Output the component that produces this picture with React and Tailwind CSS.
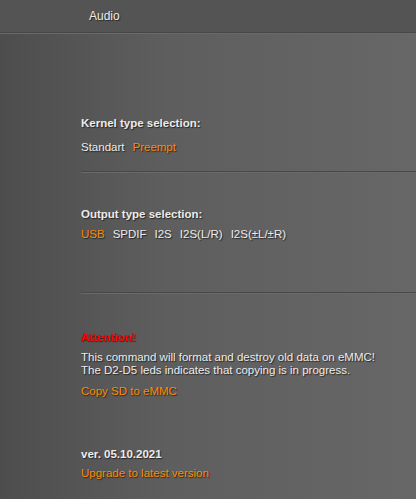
import React from 'react'

const shadow = '[text-shadow:1px_1px_1px_#262626]'

const Option = ({ label, active }) => (
  <span className={active ? 'text-[#ff8a00]' : 'text-[#ececec]'}>{label}</span>
)

const Divider = () => (
  <div className="ml-[81px] border-t border-t-[#484848] border-b border-b-[#6a6a6a]" />
)

const App = () => {
  return (
    <div className={`h-[499px] w-[416px] overflow-hidden bg-[linear-gradient(90deg,#4d4d4d_0%,#5e5e5e_40%,#676767_100%)] font-['Liberation_Sans',Arial,sans-serif] text-[11.5px] text-[#ececec] ${shadow}`}>
      <header className="flex h-[33px] items-center border-b border-b-[#474747] bg-[#545454] pl-[89px] shadow-[0_1px_0_#6a6a6a]">
        <span className="text-[12px]">Audio</span>
      </header>

      <section className="pl-[81px] pt-[83px]">
        <h2 className="font-bold leading-[14px]">Kernel type selection:</h2>
        <div className="mt-[10px] flex gap-[8px] leading-[14px]">
          <Option label="Standart" />
          <Option label="Preempt" active />
        </div>
      </section>

      <div className="mt-[17px]">
        <Divider />
      </div>

      <section className="pl-[81px] pt-[34px]">
        <h2 className="font-bold leading-[14px]">Output type selection:</h2>
        <div className="mt-[6px] flex gap-[8px] leading-[14px]">
          <Option label="USB" active />
          <Option label="SPDIF" />
          <Option label="I2S" />
          <Option label="I2S(L/R)" />
          <Option label="I2S(±L/±R)" />
        </div>
      </section>

      <div className="mt-[51px]">
        <Divider />
      </div>

      <section className="pl-[81px] pt-[36px]">
        <h2 className="font-bold leading-[14px] text-[#ff0000]">Attention!</h2>
        <p className="mt-[7px] leading-[13px]">
          This command will format and destroy old data on eMMC!
          <br />
          The D2-D5 leds indicates that copying is in progress.
        </p>
        <a className="mt-[7px] block leading-[14px] text-[#ff8a00]">Copy SD to eMMC</a>
      </section>

      <section className="pl-[81px] pt-[49px]">
        <h2 className="font-bold leading-[14px]">ver. 05.10.2021</h2>
        <a className="mt-[5px] block leading-[14px] text-[#ff8a00]">Upgrade to latest version</a>
      </section>
    </div>
  )
}

export default App
